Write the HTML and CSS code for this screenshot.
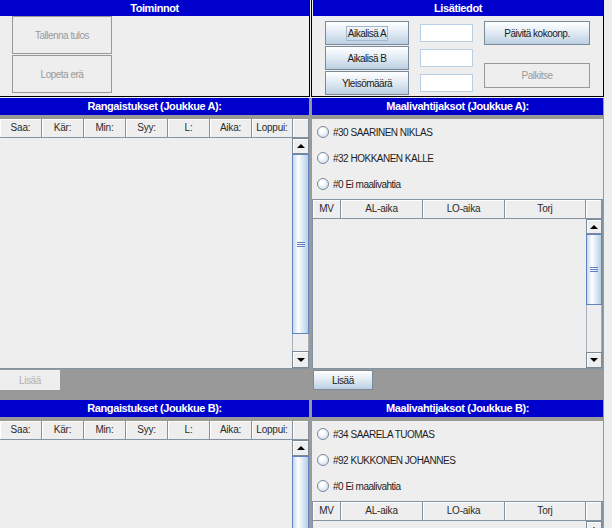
FILE: index.html
```html
<!DOCTYPE html>
<html lang="fi">
<head>
<meta charset="utf-8">
<title>Ottelu</title>
<link rel="stylesheet" href="styles.css">
</head>
<body>
<div class="app">
  <div class="top">
    <section class="tbox tbox-left">
      <div class="hdr">Toiminnot</div>
      <div class="act">
        <button class="bigbtn" disabled>Tallenna tulos</button>
        <button class="bigbtn" disabled>Lopeta erä</button>
      </div>
    </section>
    <section class="tbox tbox-right">
      <div class="hdr hdr-info">Lisätiedot</div>
      <div class="info">
        <div class="info-c1">
          <button class="btn"><span class="focus">Aikalisä A</span></button>
          <button class="btn btn-2">Aikalisä B</button>
          <button class="btn">Yleisömäärä</button>
        </div>
        <div class="info-c2">
          <input class="fld" type="text">
          <input class="fld" type="text">
          <input class="fld" type="text">
        </div>
        <div class="info-c3">
          <button class="btn">Päivitä kokoonp.</button>
          <button class="btn btn-dis" disabled>Palkitse</button>
        </div>
      </div>
    </section>
  </div>

  <div class="main">
    <!-- Penalties A -->
    <section class="sec">
      <div class="hdr hdr-sec">Rangaistukset (Joukkue A):</div>
      <div class="ptbl">
        <div class="thead thead-p">
          <div class="th">Saa:</div><div class="th">Kär:</div><div class="th">Min:</div><div class="th">Syy:</div><div class="th">L:</div><div class="th">Aika:</div><div class="th">Loppui:</div><div class="th"></div>
        </div>
        <div class="tbody">
          <div class="view"></div>
          <div class="sb sb-pa">
            <div class="sb-btn sb-up"></div>
            <div class="sb-thumb"><span class="grip"></span></div>
            <div class="sb-track"></div>
            <div class="sb-btn sb-down"></div>
          </div>
        </div>
      </div>
    </section>

    <!-- Goalies A -->
    <section class="sec">
      <div class="hdr hdr-sec">Maalivahtijaksot (Joukkue A):</div>
      <div class="gpanel">
        <label class="radio"><span class="rdot"></span>#30 SAARINEN NIKLAS</label>
        <label class="radio"><span class="rdot"></span>#32 HOKKANEN KALLE</label>
        <label class="radio"><span class="rdot"></span>#0 Ei maalivahtia</label>
        <div class="gtbl">
          <div class="thead thead-g">
            <div class="th">MV</div><div class="th">AL-aika</div><div class="th">LO-aika</div><div class="th">Torj</div><div class="th"></div>
          </div>
          <div class="tbody">
            <div class="view"></div>
            <div class="sb sb-ga">
              <div class="sb-btn sb-up"></div>
              <div class="sb-thumb"><span class="grip"></span></div>
              <div class="sb-track"></div>
              <div class="sb-btn sb-down"></div>
            </div>
          </div>
        </div>
      </div>
    </section>

    <div class="bar"><button class="lisaa lisaa-dis" disabled>Lisää</button></div>
    <div class="bar"><button class="lisaa lisaa-on">Lisää</button></div>

    <!-- Penalties B -->
    <section class="sec">
      <div class="hdr hdr-sec">Rangaistukset (Joukkue B):</div>
      <div class="ptbl">
        <div class="thead thead-p">
          <div class="th">Saa:</div><div class="th">Kär:</div><div class="th">Min:</div><div class="th">Syy:</div><div class="th">L:</div><div class="th">Aika:</div><div class="th">Loppui:</div><div class="th"></div>
        </div>
        <div class="tbody">
          <div class="view"></div>
          <div class="sb sb-pa">
            <div class="sb-btn sb-up"></div>
            <div class="sb-thumb"><span class="grip"></span></div>
            <div class="sb-track"></div>
            <div class="sb-btn sb-down"></div>
          </div>
        </div>
      </div>
    </section>

    <!-- Goalies B -->
    <section class="sec">
      <div class="hdr hdr-sec">Maalivahtijaksot (Joukkue B):</div>
      <div class="gpanel">
        <label class="radio"><span class="rdot"></span>#34 SAARELA TUOMAS</label>
        <label class="radio"><span class="rdot"></span>#92 KUKKONEN JOHANNES</label>
        <label class="radio"><span class="rdot"></span>#0 Ei maalivahtia</label>
        <div class="gtbl">
          <div class="thead thead-g">
            <div class="th">MV</div><div class="th">AL-aika</div><div class="th">LO-aika</div><div class="th">Torj</div><div class="th"></div>
          </div>
          <div class="tbody">
            <div class="view"></div>
            <div class="sb sb-ga">
              <div class="sb-btn sb-up"></div>
              <div class="sb-thumb"><span class="grip"></span></div>
              <div class="sb-track"></div>
              <div class="sb-btn sb-down"></div>
            </div>
          </div>
        </div>
      </div>
    </section>
  </div>
</div>
</body>
</html>
```

FILE: styles.css
```css
* { box-sizing: border-box; }
html, body { margin: 0; padding: 0; overflow: hidden; }
body {
  width: 612px;
  height: 528px;
  background: #eeeeee;
  font-family: "Liberation Sans", Arial, sans-serif;
  font-size: 10px;
  color: #333;
}
.app { width: 604px; height: 528px; overflow: hidden; }

/* ---------- top row ---------- */
.top { display: flex; height: 97px; margin-bottom: 1px; }
.tbox { height: 97px; background: #eeeeee; border-bottom: 1px solid #000; }
.tbox-left { width: 310px; border-right: 1px solid #000; }
.tbox-right { width: 293px; margin-left: 1px; border-left: 1px solid #000; border-right: 1px solid #000; }

.hdr {
  background: #0000cc;
  color: #fff;
  font-weight: bold;
  font-size: 11px;
  letter-spacing: -0.4px;
  text-align: center;
  height: 16px;
  line-height: 16px;
}
.hdr-info { margin-left: 1px; }

.act { display: flex; flex-direction: column; gap: 1px; padding-left: 12px; }
.bigbtn {
  width: 100px; height: 38px; padding: 0;
  border: 1px solid #999; background: #eeeeee; color: #9a9a9a;
  font: 10px "Liberation Sans", Arial, sans-serif; letter-spacing: -0.5px;
}

.info { display: flex; padding: 5px 0 0 13px; }
.info-c1 { width: 84px; display: flex; flex-direction: column; }
.info-c2 { width: 53px; margin-left: 11px; padding-top: 3px; display: flex; flex-direction: column; gap: 7px; }
.info-c3 { width: 106px; margin-left: 11px; display: flex; flex-direction: column; gap: 18px; }

.btn {
  height: 24px; padding: 0;
  border: 1px solid #7a8a99;
  background: linear-gradient(#ffffff, #e3ecf5 45%, #bccfe2);
  color: #1a1a1a;
  font: 10px "Liberation Sans", Arial, sans-serif; letter-spacing: -0.5px;
}
.btn-2 { margin: 1px 0; }
.btn-dis { height: 25px; background: #eeeeee; border-color: #999; color: #9a9a9a; }
.focus { border: 1px solid #a3b8cc; padding: 1px 1px; }
.fld { height: 18px; width: 53px; border: 1px solid #b8cfe5; background: #fff; margin: 0; padding: 0; }

/* ---------- main grid ---------- */
.main {
  display: grid;
  grid-template-columns: 309px 291px;
  grid-template-rows: 271px 31px 128px;
  column-gap: 3px;
  width: 604px;
  padding-right: 1px;
  background: #999999;
}
.sec { display: flex; flex-direction: column; overflow: hidden; min-height: 0; }
.hdr-sec { height: 17px; line-height: 17px; margin-bottom: 4px; flex: none; }

/* table header */
.thead { display: grid; height: 19px; flex: none; border-bottom: 1px solid #8393a2; background: #eeeeee; }
.thead-p { grid-template-columns: 42px 42px 42px 42px 42px 42px 41px 16px; }
.thead-g { grid-template-columns: 28px 82px 82px 81px 16px; }
.th {
  border-right: 1px solid #8393a2;
  box-shadow: inset 1px 1px #ffffff;
  text-align: center;
  line-height: 18px;
  color: #2a2a2a;
  letter-spacing: -0.2px;
}

.ptbl { height: 250px; flex: none; display: flex; flex-direction: column; background: #eeeeee; border-bottom: 1px solid #8393a2; }
.tbody { flex: 1; display: flex; }
.view { flex: 1; background: #eeeeee; }

/* scrollbar */
.sb { width: 17px; display: flex; flex-direction: column; background: #eeeeee; }
.gtbl .sb { width: 16px; }
.sb-btn {
  border: 1px solid #7a8a99;
  background: #eeeeee;
  box-shadow: inset 1px 1px #ffffff;
  display: flex; align-items: center; justify-content: center;
  flex: none;
}
.sb-up::after, .sb-down::after {
  content: ""; width: 0; height: 0;
  border-left: 4px solid transparent; border-right: 4px solid transparent;
}
.sb-up::after { border-bottom: 4px solid #000; }
.sb-down::after { border-top: 4px solid #000; }
.sb-thumb {
  border: 1px solid #6382bf;
  background: linear-gradient(to right, #c4d8ee, #ffffff 35%, #e6eff8 55%, #b8cfe5);
  display: flex; align-items: center; justify-content: center;
  flex: none;
}
.grip {
  width: 8px; height: 5px;
  background: repeating-linear-gradient(#6382bf 0 1px, transparent 1px 2px);
}
.sb-track { flex: 1; border-left: 1px solid #a5b0bb; border-right: 1px solid #a5b0bb; }

.sb-pa .sb-up { height: 16px; }
.sb-pa .sb-thumb { height: 180px; }
.sb-pa .sb-down { height: 17px; }
.sb-ga .sb-up { height: 15px; }
.sb-ga .sb-thumb { height: 71px; }
.sb-ga .sb-down { height: 16px; }

/* goalie panel */
.gpanel { height: 250px; flex: none; display: flex; flex-direction: column; background: #eeeeee; }
.radio {
  height: 26px; flex: none; display: flex; align-items: center;
  padding-left: 5px; color: #1e1e1e; letter-spacing: -0.5px;
}
.rdot {
  width: 12px; height: 12px; border-radius: 50%;
  border: 1px solid #7a8a99;
  background: radial-gradient(circle at 40% 35%, #ffffff 20%, #d6e2ee 75%, #b8cfe5);
  margin-right: 4px; flex: none;
}
.gtbl {
  flex: 1; margin-top: 2px;
  display: flex; flex-direction: column;
  border: 1px solid #8393a2;
}

/* bars */
.bar { padding-top: 1px; }
.lisaa {
  width: 60px; height: 20px; padding: 0;
  font: 10px "Liberation Sans", Arial, sans-serif; letter-spacing: -0.4px;
}
.lisaa-dis { border: none; background: #eeeeee; color: #b0b0b0; }
.lisaa-on {
  margin-left: 1px;
  border: 1px solid #7a8a99;
  background: linear-gradient(#ffffff, #e3ecf5 45%, #bccfe2);
  color: #1a1a1a;
}
```
